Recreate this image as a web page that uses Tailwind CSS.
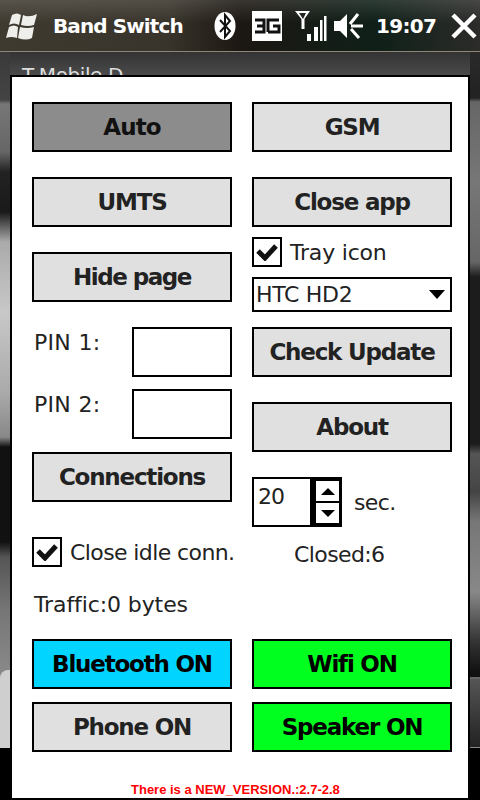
<!DOCTYPE html>
<html lang="en">
<head>
    <meta charset="UTF-8">
    <title>Band Switch</title>
    <script src="https://cdn.jsdelivr.net/npm/@tailwindcss/browser@4"></script>
</head>
<body class="w-[480px] h-[800px] overflow-hidden bg-black font-['DejaVu_Sans',sans-serif]">
    <!-- title bar -->
    <header class="h-[51px] flex items-center bg-[linear-gradient(180deg,rgba(255,255,255,0.13),rgba(255,255,255,0)_45%),linear-gradient(90deg,#3f3a30_0%,#38342b_35%,#1c1712_50%,#0f1f18_78%,#2c2c2a_100%)] text-white">
        <svg class="ml-[6px] w-[32px] h-[30px]" viewBox="0 0 32 30" fill="#eeeeea">
            <path d="M6 4 Q11 1 15 4 L13 14 Q8 11 3 14 Z"/>
            <path d="M17 4 Q23 7 31 3 L28 14 Q22 16 15 14 Z"/>
            <path d="M3 16 Q8 13 12 16 L11 27 Q5 25 0 27 Z"/>
            <path d="M14 16 Q21 18 28 16 L26 27 Q20 30 12 27 Z"/>
        </svg>
        <h1 class="ml-[15px] w-[161px] text-[20px] font-bold tracking-[-0.9px] whitespace-nowrap">Band Switch</h1>
        <svg class="w-[22px] h-[30px]" viewBox="0 0 22 30">
            <ellipse cx="11" cy="15" rx="10.5" ry="14" fill="#fff"/>
            <path d="M6 9 L16 20 L11 26 L11 4 L16 10 L6 21" fill="none" stroke="#111" stroke-width="2"/>
        </svg>
        <svg class="ml-[16px] w-[30px] h-[30px]" viewBox="0 0 30 30">
            <rect width="30" height="30" fill="#fff"/>
            <path d="M3 9 H12 V21 H3 M5 15 H12 M16 21 V9 H27 M16 21 H27 V15 H21" fill="none" stroke="#111" stroke-width="3"/>
        </svg>
        <svg class="ml-[12px] w-[33px] h-[32px]" viewBox="0 0 33 32" fill="#fff">
            <path d="M1 1 H16 L9 11 Z M5 3 L9 9 L12 3 Z" fill-rule="evenodd"/>
            <rect x="7.500" y="9" width="3" height="10"/>
            <rect x="13" y="24" width="4" height="7"/>
            <rect x="20" y="17" width="4" height="14"/>
            <rect x="26" y="10" width="2.500" height="21"/>
            <rect x="30" y="6" width="2.500" height="25"/>
        </svg>
        <svg class="ml-[7px] w-[29px] h-[28px]" viewBox="0 0 29 28" fill="#fff">
            <path d="M0 9 H6 L13 2 V26 L6 19 H0 Z"/>
            <path d="M24 2 L16 12 M17 14 H29 M17 17 L25 26" stroke="#fff" stroke-width="3" fill="none"/>
        </svg>
        <span class="ml-[13px] text-[20px] font-bold tracking-[-0.7px] w-[65px]">19:07</span>
        <svg class="ml-[10px] w-[26px] h-[26px]" viewBox="0 0 26 26">
            <path d="M2 2 L24 24 M24 2 L2 24" stroke="#fff" stroke-width="4.500"/>
        </svg>
    </header>
    <div class="h-px bg-[#8f8576]"></div>

    <main class="h-[748px] flex">
        <!-- desktop showing left of the dialog -->
        <div class="w-[10px] flex flex-col">
            <div class="h-[618px] bg-[linear-gradient(180deg,#3a3a3a_0px,#444_48px,#777_52px,#666_100px,#222_120px,#1a1a1a_160px,#aaa_190px,#c8c8c8_260px,#aaa_340px,#888_385px,#111_395px,#111_490px,#555_505px,#777_560px,#888_618px)]"></div>
            <div class="h-[78px] bg-[#888]"><div class="h-full rounded-tl-[8px] bg-[#cfcfcf]"></div></div>
        </div>

        <div class="w-[460px] flex flex-col">
            <div class="h-[23px] overflow-hidden pl-[12px] pt-[11px] bg-[linear-gradient(180deg,#333,#4a4a4a)] text-[20px] leading-[24px] text-[#ddd] whitespace-nowrap tracking-[-0.4px]">T-Mobile D</div>
            <section class="h-[725px] relative bg-white border-2 border-black pl-[20px] pt-[25px] flex gap-[20px] text-[#222]">
                <!-- left column -->
                <div class="w-[200px] shrink-0 flex flex-col">
                    <button class="h-[50px] border-[2px] border-black bg-[#8c8c8c] text-[#111] text-[23px] font-bold tracking-[-0.9px]">Auto</button>
                    <button class="h-[50px] mt-[25px] border-[2px] border-black bg-[#e0e0e0] text-[23px] font-bold tracking-[-1.2px]">UMTS</button>
                    <button class="h-[50px] mt-[25px] border-[2px] border-black bg-[#e0e0e0] text-[23px] font-bold tracking-[-1.5px]">Hide page</button>
                    <div class="h-[50px] mt-[25px] flex justify-between">
                        <span class="ml-[2px] mt-[2px] text-[22px] leading-[28px] tracking-[0.3px]">PIN 1:</span>
                        <div class="w-[100px] border-[2px] border-black"></div>
                    </div>
                    <div class="h-[50px] mt-[12px] flex justify-between">
                        <span class="ml-[2px] mt-[2px] text-[22px] leading-[28px] tracking-[0.3px]">PIN 2:</span>
                        <div class="w-[100px] border-[2px] border-black"></div>
                    </div>
                    <button class="h-[50px] mt-[13px] border-[2px] border-black bg-[#e0e0e0] text-[23px] font-bold tracking-[-1.2px]">Connections</button>
                    <label class="h-[30px] mt-[35px] flex items-center gap-[8px] whitespace-nowrap text-[22px] tracking-[-0.6px]">
                        <span class="w-[30px] h-[30px] shrink-0 border-[2px] border-black flex items-center justify-center">
                            <svg class="w-[22px] h-[18px]" viewBox="0 0 22 18"><path d="M2 8 L9 15 L20 3" fill="none" stroke="#111" stroke-width="5"/></svg>
                        </span>
                        Close idle conn.
                    </label>
                    <p class="mt-[23px] ml-[2px] text-[22px] leading-[30px] tracking-[-0.1px]">Traffic:0 bytes</p>
                    <button class="h-[50px] mt-[19px] border-[2px] border-black bg-[#00d4ff] text-black text-[23px] font-bold tracking-[-1.2px]">Bluetooth ON</button>
                    <button class="h-[50px] mt-[13px] border-[2px] border-black bg-[#e0e0e0] text-[23px] font-bold tracking-[-1.2px]">Phone ON</button>
                </div>
                <!-- right column -->
                <div class="w-[200px] shrink-0 flex flex-col">
                    <button class="h-[50px] border-[2px] border-black bg-[#e0e0e0] text-[23px] font-bold tracking-[-1.2px]">GSM</button>
                    <button class="h-[50px] mt-[25px] border-[2px] border-black bg-[#e0e0e0] text-[23px] font-bold tracking-[-1.2px]">Close app</button>
                    <label class="h-[30px] mt-[10px] flex items-center gap-[8px] text-[22px] tracking-[-0.2px]">
                        <span class="w-[30px] h-[30px] border-[2px] border-black flex items-center justify-center">
                            <svg class="w-[22px] h-[18px]" viewBox="0 0 22 18"><path d="M2 8 L9 15 L20 3" fill="none" stroke="#111" stroke-width="5"/></svg>
                        </span>
                        Tray icon
                    </label>
                    <div class="h-[35px] mt-[10px] border-[2px] border-black flex items-center justify-between pl-[2px] pr-[5px] text-[22px] tracking-[-0.3px]">
                        HTC HD2
                        <span class="w-0 h-0 border-x-[8px] border-x-transparent border-t-[9px] border-t-black"></span>
                    </div>
                    <button class="h-[50px] mt-[15px] border-[2px] border-black bg-[#e0e0e0] text-[23px] font-bold tracking-[-1.2px]">Check Update</button>
                    <button class="h-[50px] mt-[25px] border-[2px] border-black bg-[#e0e0e0] text-[23px] font-bold tracking-[-1.2px]">About</button>
                    <div class="h-[50px] mt-[25px] flex items-center">
                        <div class="w-[90px] h-[50px] border-[2px] border-black flex">
                            <span class="w-[56px] pl-[4px] text-[22px] leading-[36px] tracking-[-1px]">20</span>
                            <div class="w-[30px] border-l-[6px] border-r-[1px] border-y-[2px] border-black flex flex-col gap-[2px] bg-black">
                                <div class="h-[20px] bg-white flex items-center justify-center">
                                    <span class="w-0 h-0 border-x-[7px] border-x-transparent border-b-[7px] border-b-black"></span>
                                </div>
                                <div class="h-[20px] bg-white flex items-center justify-center">
                                    <span class="w-0 h-0 border-x-[7px] border-x-transparent border-t-[7px] border-t-black"></span>
                                </div>
                            </div>
                        </div>
                        <span class="ml-[12px] text-[22px] tracking-[-0.6px]">sec.</span>
                    </div>
                    <p class="mt-[13px] ml-[42px] text-[22px] leading-[30px] tracking-[-0.6px]">Closed:6</p>
                    <button class="h-[50px] mt-[69px] border-[2px] border-black bg-[#00ff1e] text-black text-[23px] font-bold tracking-[-1.2px]">Wifi ON</button>
                    <button class="h-[50px] mt-[13px] border-[2px] border-black bg-[#00ff1e] text-black text-[23px] font-bold tracking-[-1.2px]">Speaker ON</button>
                </div>
                <p class="absolute left-[119px] bottom-[0px] whitespace-nowrap text-[13px] leading-[16px] font-bold text-[#ff0000] font-['Liberation_Sans',sans-serif]">There is a NEW_VERSION.:2.7-2.8</p>
            </section>
        </div>

        <!-- desktop showing right of the dialog -->
        <div class="w-[10px] flex flex-col">
            <div class="h-[625px] bg-[linear-gradient(180deg,#2a2a2a_0px,#222_46px,#666_50px,#777_130px,#666_210px,#1c1c1c_225px,#1c1c1c_392px,#555_402px,#444_440px,#777_470px,#888_540px,#333_590px,#111_620px)]"></div>
            <div class="h-[2px] bg-[#666]"></div>
            <div class="h-[68px] bg-[linear-gradient(180deg,#555,#222)]"></div>
            <div class="h-px bg-[#888]"></div>
        </div>
    </main>
</body>
</html>
